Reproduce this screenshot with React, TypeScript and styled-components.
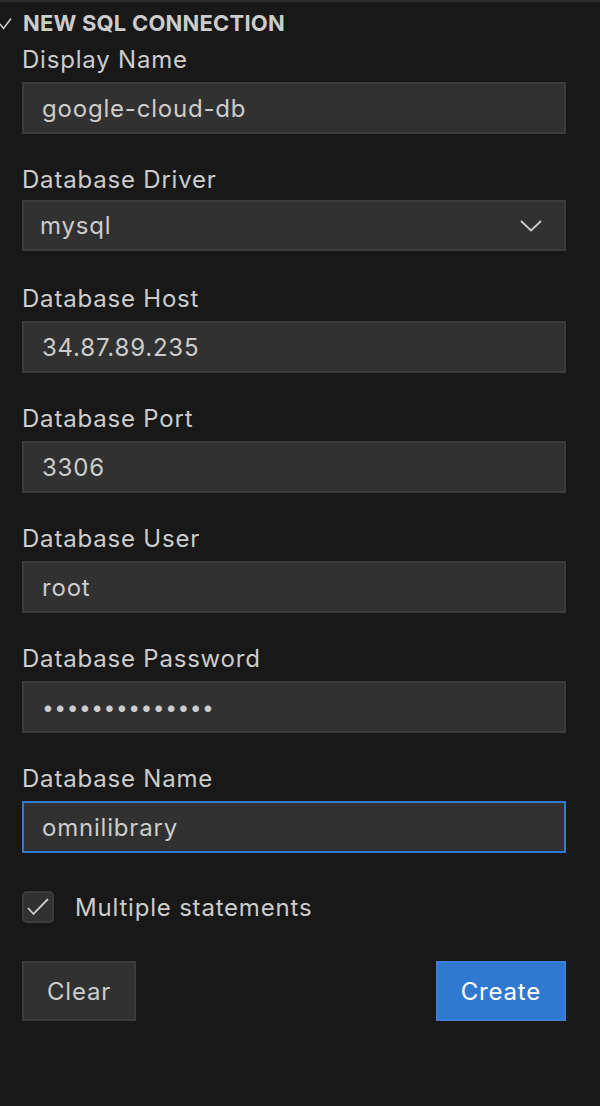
import styled, { createGlobalStyle } from "styled-components";

const GlobalStyle = createGlobalStyle`
  html, body {
    margin: 0;
    padding: 0;
    background: #181818;
  }
  body {
    font-family: Inter, "Noto Sans", "Liberation Sans", sans-serif;
    color: #cccccc;
  }
`;

const Panel = styled.div`
  min-height: 1104px;
  border-top: 2px solid #2b2b2b;
  background: #181818;
`;

const Header = styled.div`
  height: 42px;
  display: flex;
  align-items: center;
  font-size: 22px;
  font-weight: 700;
  color: #cccccc;
  letter-spacing: 0.2px;
`;

const Twistie = styled.svg`
  width: 23px;
  height: 14px;
  flex: none;
  margin-top: 1px;
`;

const Form = styled.div`
  padding: 0 34px 0 22px;
  display: flex;
  flex-direction: column;
  letter-spacing: 0.8px;
`;

const Field = styled.div`
  display: flex;
  flex-direction: column;
  margin-bottom: 30px;
`;

const Label = styled.label`
  font-size: 24px;
  line-height: 30px;
  padding-top: 1px;
  margin-bottom: 7px;
  color: #cccccc;
`;

const TextInput = styled.input<{ $focused?: boolean }>`
  box-sizing: border-box;
  width: 100%;
  height: 52px;
  margin: 0;
  padding: 0 18px;
  background: #313131;
  border: 2px solid ${(p) => (p.$focused ? "#2f7ad3" : "#3c3c3c")};
  color: #cccccc;
  font-family: inherit;
  font-size: 24px;
  letter-spacing: 0.8px;
  outline: none;
  &[type="password"] {
    font-size: 21px;
    letter-spacing: 0.5px;
  }
`;

const Select = styled.div`
  box-sizing: border-box;
  height: 51px;
  margin-top: -2px;
  margin-bottom: 2px;
  display: flex;
  align-items: center;
  justify-content: space-between;
  padding: 0 22px 0 16px;
  background: #313131;
  border: 2px solid #3c3c3c;
  font-size: 24px;
  color: #cccccc;
`;

const CheckRow = styled.div`
  display: flex;
  align-items: center;
  gap: 21px;
  margin-top: 8px;
  font-size: 24px;
  color: #cccccc;
`;

const CheckBox = styled.span`
  box-sizing: border-box;
  width: 32px;
  height: 32px;
  border-radius: 5px;
  background: #313131;
  border: 2px solid #3c3c3c;
  display: flex;
  align-items: center;
  justify-content: center;
`;

const Actions = styled.div`
  display: flex;
  justify-content: space-between;
  margin-top: 38px;
`;

const Button = styled.button<{ $primary?: boolean }>`
  box-sizing: border-box;
  height: 60px;
  padding: 0 23px;
  font-family: inherit;
  font-size: 24px;
  letter-spacing: 0.8px;
  cursor: pointer;
  background: ${(p) => (p.$primary ? "#3178d0" : "#313131")};
  border: 2px solid ${(p) => (p.$primary ? "#3a7fd5" : "#3c3c3c")};
  color: ${(p) => (p.$primary ? "#ffffff" : "#cccccc")};
`;

const fields = [
  { label: "Display Name", value: "google-cloud-db" },
  { label: "Database Driver", value: "mysql", select: true },
  { label: "Database Host", value: "34.87.89.235" },
  { label: "Database Port", value: "3306" },
  { label: "Database User", value: "root" },
  { label: "Database Password", value: "abcdefghijklmn", password: true },
  { label: "Database Name", value: "omnilibrary", focused: true },
];

export default function App() {
  return (
    <>
      <GlobalStyle />
      <Panel>
        <Header>
          <Twistie viewBox="0 0 23 14">
            <polyline
              points="0,7 3.5,11.5 11,1.5"
              fill="none"
              stroke="#cccccc"
              strokeWidth="1.6"
            />
          </Twistie>
          NEW SQL CONNECTION
        </Header>
        <Form>
          {fields.map((f) => (
            <Field key={f.label}>
              <Label>{f.label}</Label>
              {f.select ? (
                <Select>
                  <span>{f.value}</span>
                  <svg width="22" height="12" viewBox="0 0 22 12">
                    <polyline
                      points="1,1 11,10.5 21,1"
                      fill="none"
                      stroke="#cccccc"
                      strokeWidth="1.8"
                    />
                  </svg>
                </Select>
              ) : (
                <TextInput
                  readOnly
                  type={f.password ? "password" : "text"}
                  value={f.value}
                  $focused={f.focused}
                />
              )}
            </Field>
          ))}
          <CheckRow>
            <CheckBox>
              <svg width="22" height="18" viewBox="0 0 22 18">
                <polyline
                  points="1,10 6.5,16 21,1"
                  fill="none"
                  stroke="#cccccc"
                  strokeWidth="1.8"
                />
              </svg>
            </CheckBox>
            Multiple statements
          </CheckRow>
          <Actions>
            <Button>Clear</Button>
            <Button $primary>Create</Button>
          </Actions>
        </Form>
      </Panel>
    </>
  );
}
